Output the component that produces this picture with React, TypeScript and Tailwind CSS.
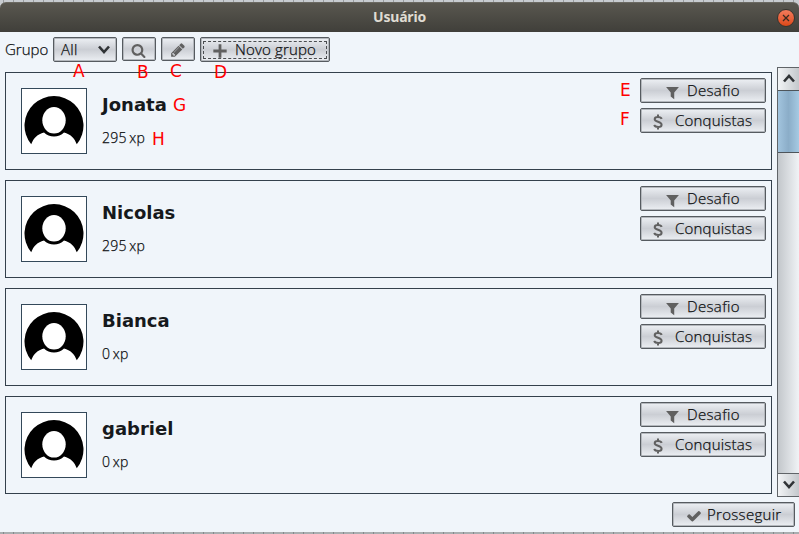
import React from "react";

const paths = {
  search:
    "M1216 832q0-185-131.500-316.500t-316.500-131.500-316.500 131.500-131.500 316.500 131.500 316.500 316.500 131.500 316.500-131.500 131.500-316.500zm512 832q0 52-38 90t-90 38q-54 0-90-38l-343-342q-179 124-399 124-143 0-273.500-55.500t-225-150-150-225-55.500-273.500 55.500-273.500 150-225 225-150 273.500-55.500 273.500 55.500 225 150 150 225 55.500 273.500q0 220-124 399l343 343q37 37 37 90z",
  pencil:
    "M491 1536l91-91-235-235-91 91v107h128v128h107zm523-928q0-22-22-22-10 0-17 7l-542 542q-7 7-7 17 0 22 22 22 10 0 17-7l542-542q7-7 7-17zm-54-192l416 416-832 832h-416v-416zm683 96q0 53-37 90l-166 166-416-416 166-165q36-38 90-38 53 0 91 38l235 234q37 39 37 91z",
  plus: "M740 150h312v590h590v312h-590v590h-312v-590h-590v-312h590z",
  filter: "M130 230h1532l-560 680v800l-420-340v-460z",
  check:
    "M1671 566q0 40-28 68l-724 724-136 136q-28 28-68 28t-68-28l-136-136-362-362q-28-28-28-68t28-68l136-136q28-28 68-28t68 28l294 295 656-657q28-28 68-28t68 28l136 136q28 28 28 68z",
};

function Icon({ name, className }: { name: keyof typeof paths; className: string }) {
  return (
    <svg viewBox="0 0 1792 1792" className={`shrink-0 fill-[#606060] ${className}`}>
      <path d={paths[name]} />
    </svg>
  );
}

function Button({ className, children }: { className: string; children: React.ReactNode }) {
  return (
    <button
      className={`flex shrink-0 items-center rounded-[2px] border border-[#565b60] bg-linear-to-b from-[#edf0f4] via-[#cbced4] to-[#eceff3] shadow-[inset_0_0_0_1px_#b4b8bd] ${className}`}
    >
      {children}
    </button>
  );
}

function Dollar() {
  return (
    <svg viewBox="0 0 10 16" className="mt-[2px] ml-[12px] h-[16px] w-[10px] shrink-0 fill-none stroke-[#606060] stroke-2">
      <path d="M8.700 4.900C7.800 2.300 1.700 2.100 1.700 5.200C1.700 8.300 8.600 7.300 8.600 10.700C8.600 13.800 2.300 13.500 1.100 11M5 0.500V3.500M5 12.500V15.500" />
    </svg>
  );
}

function Avatar() {
  return (
    <div className="mt-[15px] ml-[15px] h-[66px] w-[66px] shrink-0 border border-[#34495a] bg-white">
      <svg viewBox="0 0 64 64" className="h-full w-full">
        <path
          fill="#000"
          d="M9.200 55.300A29.500 29.500 0 1 1 54.800 55.300C52.500 49 48.500 45 42 43.400C37 48.700 27 48.700 22 43.400C15.500 45 11.500 49 9.200 55.300Z"
        />
        <ellipse cx="32" cy="31.300" rx="11.700" ry="13.200" fill="#fff" />
      </svg>
    </div>
  );
}

function Mark({ className, children }: { className: string; children: string }) {
  return (
    <span className={`absolute font-['DejaVu_Sans',sans-serif] text-[17px] leading-[20px] font-normal text-[#ff0000] ${className}`}>
      {children}
    </span>
  );
}

const users = [
  { name: "Jonata", xp: "295 xp" },
  { name: "Nicolas", xp: "295 xp" },
  { name: "Bianca", xp: "0 xp" },
  { name: "gabriel", xp: "0 xp" },
];

function UserCard({ name, xp }: { name: string; xp: string }) {
  return (
    <div className="flex h-[98px] w-[767px] shrink-0 border border-[#34404c]">
      <Avatar />
      <div className="ml-[15px] flex-1">
        <div className="mt-[21px] font-['DejaVu_Sans',sans-serif] text-[18px] leading-[22px] font-bold text-[#16191c] [-webkit-text-stroke:0]">{name}</div>
        <div className="mt-[12px] text-[14px] leading-[20px] tracking-[0.3px] [word-spacing:-1.5px]">{xp}</div>
      </div>
      <div className="mt-[5px] mr-[5px] flex flex-col gap-[5px]">
        <Button className="h-[25px] w-[126px]">
          <Icon name="filter" className="mt-[4px] ml-[24px] h-[15px] w-[15px]" />
          <span className="ml-[7px] tracking-[0.35px]">Desafio</span>
        </Button>
        <Button className="h-[25px] w-[126px]">
          <Dollar />
          <span className="ml-[12px] tracking-[0.2px]">Conquistas</span>
        </Button>
      </div>
    </div>
  );
}

function Chevron({ up = false, className = "" }: { up?: boolean; className?: string }) {
  return (
    <svg viewBox="0 0 12 9" className={`h-[9px] w-[12px] fill-none stroke-[#303336] stroke-[2.6] ${className}`}>
      <path d={up ? "M1 7.500L6 2L11 7.500" : "M1 1.500L6 7L11 1.500"} />
    </svg>
  );
}

export default function App() {
  return (
    <div className="relative flex h-[534px] w-[799px] flex-col overflow-hidden bg-[#c8ccd0] bg-[repeating-linear-gradient(90deg,transparent_0_3px,#999c9f_3px_4px,transparent_4px_10px)] font-['Open_Sans','Noto_Sans',sans-serif] text-[15px] font-light text-[#0c0e10] [-webkit-text-stroke:0.25px_#0c0e10]">
      <header className="mt-[2px] flex h-[30px] shrink-0 items-center rounded-t-[6px] border-t border-[#6b6961] bg-linear-to-b from-[#59574f] to-[#403f3a]">
        <h1 className="w-full text-center font-['Noto_Sans',sans-serif] text-[14px] leading-[20px] font-bold text-[#dfdbd2] [-webkit-text-stroke:0]">
          <span className="relative -top-px tracking-[-0.2px]">Usuário</span>
        </h1>
        <div className="absolute right-[4px] flex h-[18px] w-[18px] items-center justify-center rounded-full border border-[#37342f] bg-linear-to-b from-[#f37b5b] to-[#dd4814]">
          <svg viewBox="0 0 8 8" className="h-[8px] w-[8px] stroke-[#3a2a20] stroke-[1.3]">
            <path d="M1 1L7 7M7 1L1 7" />
          </svg>
        </div>
      </header>
      <main className="flex h-[500px] shrink-0 flex-col bg-[#f0f5fa]">
        <div className="flex h-[35px] items-start pt-[5px] pl-[5px]">
          <span className="w-[48px] leading-[25px]">Grupo</span>
          <Button className="mr-[5px] h-[25px] w-[64px] justify-between pr-[6px] pl-[7px]">
            <span className="tracking-[0.3px]">All</span>
            <Chevron />
          </Button>
          <Button className="mr-[5px] h-[24px] w-[34px] justify-center">
            <Icon name="search" className="mt-[2px] mr-px h-[15px] w-[15px]" />
          </Button>
          <Button className="mr-[5px] h-[24px] w-[34px] justify-center">
            <Icon name="pencil" className="mt-[2px] mr-px h-[16px] w-[16px]" />
          </Button>
          <Button className="h-[25px] w-[130px] p-[2px]">
            <span className="flex h-[18px] w-[124px] items-center border border-dashed border-[#4a4d50]">
              <Icon name="plus" className="mt-[3px] ml-[8px] h-[16px] w-[16px]" />
              <span className="ml-[7px] tracking-[0.15px] whitespace-nowrap">Novo grupo</span>
            </span>
          </Button>
        </div>
        <div className="flex h-[430px] shrink-0 justify-between">
          <div className="flex flex-col gap-[10px] pt-[5px] pl-[5px]">
            {users.map((user) => (
              <UserCard key={user.name} {...user} />
            ))}
          </div>
          <div className="flex w-[22px] flex-col border border-r-0 border-[#606468] bg-linear-to-r from-[#c3c7cb] to-[#f0f3f6]">
            <div className="flex h-[22px] items-center justify-center bg-linear-to-r from-[#f2f4f6] to-[#c4c8cc] pb-[2px]">
              <Chevron up />
            </div>
            <div className="h-[63px] border-y border-[#4e555b] bg-linear-to-r from-[#a2c4de] via-[#8badc8] to-[#a6cae3]" />
            <div className="flex-1" />
            <div className="flex h-[23px] items-center justify-center border-t border-[#606468] bg-linear-to-r from-[#f2f4f6] to-[#c4c8cc] pb-px">
              <Chevron />
            </div>
          </div>
        </div>
        <div className="flex justify-end pt-[5px] pr-[4px]">
          <Button className="h-[25px] w-[123px]">
            <Icon name="check" className="mt-[3px] ml-[13px] h-[16px] w-[16px]" />
            <span className="ml-[5px] tracking-[0.3px]">Prosseguir</span>
          </Button>
        </div>
      </main>
      <footer className="h-[2px] shrink-0 bg-[#a9aeb0] bg-[repeating-linear-gradient(90deg,transparent_0_3px,#85898b_3px_4px,transparent_4px_10px)]" />
      <div className="[-webkit-text-stroke:0]">
        <Mark className="top-[61px] left-[73px]">A</Mark>
        <Mark className="top-[62px] left-[137px]">B</Mark>
        <Mark className="top-[61px] left-[170px]">C</Mark>
        <Mark className="top-[62px] left-[214px]">D</Mark>
        <Mark className="top-[80px] left-[620px]">E</Mark>
        <Mark className="top-[109px] left-[620px]">F</Mark>
        <Mark className="top-[95px] left-[173px]">G</Mark>
        <Mark className="top-[129px] left-[152px]">H</Mark>
      </div>
    </div>
  );
}
